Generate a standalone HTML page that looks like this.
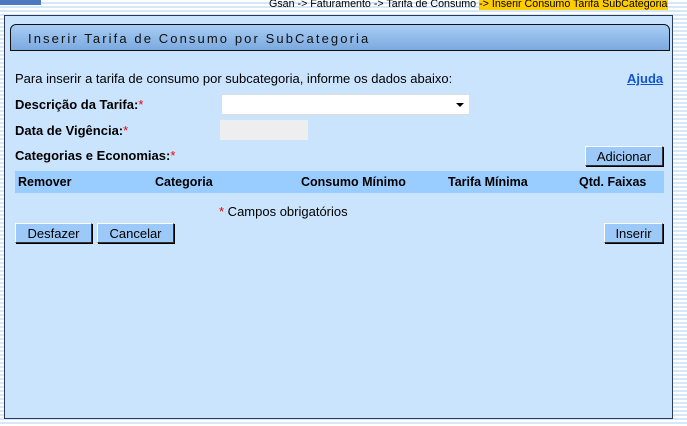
<!DOCTYPE html>
<html><head><style>
body{margin:0;width:687px;height:426px;overflow:hidden;font-family:"Liberation Sans",Arial,sans-serif;
background:repeating-linear-gradient(#fff 0,#fff 2px,#d6e8f7 2px,#d6e8f7 4px);position:relative}
.bc{position:absolute;top:-2px;left:269px;font-size:10.7px;color:#000;white-space:nowrap}
.bc span{background:#ffcc00}
.bar{position:absolute;left:0;top:0;width:41px;height:5px;background:#4c79c0}
.panel{position:absolute;left:4px;top:15px;width:667px;height:402px;background:#cbe4fd;border:1px solid #2b3b55}
.title{position:absolute;left:5px;top:8px;height:27px;border:1px solid #111;border-radius:6px 6px 0 0;
background:linear-gradient(#a8cdf5,#7ca9de);font-size:13px;letter-spacing:2.1px;color:#111;line-height:27px;padding-left:17px;box-sizing:border-box;width:660px}
.t{position:absolute;font-size:13px;color:#000;white-space:nowrap}
b{font-weight:bold}
.r{color:#e00}
.btn{position:absolute;height:20px;background:#9cc9f8;border:1px solid #333;border-top-color:#fff;border-left-color:#fff;box-shadow:1px 1px 0 #000;font-size:13px;line-height:20px;text-align:center;box-sizing:border-box}
.hdr{position:absolute;height:22px;background:#99ccff}
.hdr b{position:absolute;top:4px;font-size:12.5px}
</style></head><body>
<div class="bar"></div>
<div class="bc">Gsan -&gt; Faturamento -&gt; Tarifa de Consumo <span>-&gt; Inserir Consumo Tarifa SubCategoria</span></div>
<div class="panel">
<div class="title">Inserir Tarifa de Consumo por SubCategoria</div>
<div class="t" style="left:10px;top:55px">Para inserir a tarifa de consumo por subcategoria, informe os dados abaixo:</div>
<div class="t" style="left:622px;top:55px;color:#1155cc;text-decoration:underline;font-weight:bold">Ajuda</div>
<div class="t" style="left:10px;top:81px"><b>Descrição da Tarifa:</b><span class="r">*</span></div>
<div style="position:absolute;left:216px;top:78px;width:249px;height:21px;background:#fff;border:1px solid #ddd;box-sizing:border-box"><div style="position:absolute;right:5px;top:8px;border:4px solid transparent;border-top:4px solid #000;border-bottom:0"></div></div>
<div class="t" style="left:10px;top:107px"><b>Data de Vigência:</b><span class="r">*</span></div>
<div style="position:absolute;left:215px;top:104px;width:88px;height:20px;background:#eee"></div>
<div class="t" style="left:10px;top:132px"><b>Categorias e Economias:</b><span class="r">*</span></div>
<div class="btn" style="left:580px;top:130px;width:78px">Adicionar</div>
</div>
<div class="hdr" style="left:15px;top:171px;width:649px">
<b style="left:3px">Remover</b><b style="left:140px">Categoria</b><b style="left:286px">Consumo Mínimo</b><b style="left:433px">Tarifa Mínima</b><b style="left:564px">Qtd. Faixas</b></div>
<div class="t" style="left:219px;top:204px"><span class="r">*</span> Campos obrigatórios</div>
<div class="btn" style="left:15px;top:223px;width:77px">Desfazer</div>
<div class="btn" style="left:97px;top:223px;width:77px">Cancelar</div>
<div class="btn" style="left:604px;top:223px;width:59px">Inserir</div>
</body></html>
